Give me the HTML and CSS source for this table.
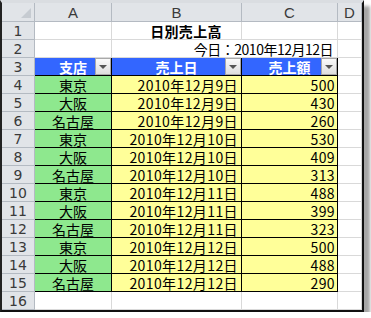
FILE: index.html
```html
<!DOCTYPE html>
<html lang="ja">
<head>
    <meta charset="utf-8">
    <title>日別売上高</title>
    <link rel="stylesheet" href="styles.css">
</head>
<body>
    <div class="window">
        <div class="sheet">
            <!-- column headers -->
            <div class="corner"></div>
            <div class="col-head">A</div>
            <div class="col-head">B</div>
            <div class="col-head">C</div>
            <div class="col-head">D</div>

            <!-- row 1: title, centred across A:C -->
            <div class="row-head">1</div>
            <div class="cell"></div>
            <div class="cell title">日別売上高</div>
            <div class="cell"></div>
            <div class="cell"></div>

            <!-- row 2: today -->
            <div class="row-head">2</div>
            <div class="cell"></div>
            <div class="cell joined"></div>
            <div class="cell today"><span>今日：2010年12月12日</span></div>
            <div class="cell"></div>

            <!-- row 3: table header -->
            <div class="row-head">3</div>
            <div class="cell th">支店<span class="filter"></span></div>
            <div class="cell th">売上日<span class="filter"></span></div>
            <div class="cell th">売上額<span class="filter"></span></div>
            <div class="cell"></div>

            <div class="row-head">4</div>
            <div class="cell branch">東京</div>
            <div class="cell date">2010年12月9日</div>
            <div class="cell amount">500</div>
            <div class="cell"></div>

            <div class="row-head">5</div>
            <div class="cell branch">大阪</div>
            <div class="cell date">2010年12月9日</div>
            <div class="cell amount">430</div>
            <div class="cell"></div>

            <div class="row-head">6</div>
            <div class="cell branch">名古屋</div>
            <div class="cell date">2010年12月9日</div>
            <div class="cell amount">260</div>
            <div class="cell"></div>

            <div class="row-head">7</div>
            <div class="cell branch">東京</div>
            <div class="cell date">2010年12月10日</div>
            <div class="cell amount">530</div>
            <div class="cell"></div>

            <div class="row-head">8</div>
            <div class="cell branch">大阪</div>
            <div class="cell date">2010年12月10日</div>
            <div class="cell amount">409</div>
            <div class="cell"></div>

            <div class="row-head">9</div>
            <div class="cell branch">名古屋</div>
            <div class="cell date">2010年12月10日</div>
            <div class="cell amount">313</div>
            <div class="cell"></div>

            <div class="row-head">10</div>
            <div class="cell branch">東京</div>
            <div class="cell date">2010年12月11日</div>
            <div class="cell amount">488</div>
            <div class="cell"></div>

            <div class="row-head">11</div>
            <div class="cell branch">大阪</div>
            <div class="cell date">2010年12月11日</div>
            <div class="cell amount">399</div>
            <div class="cell"></div>

            <div class="row-head">12</div>
            <div class="cell branch">名古屋</div>
            <div class="cell date">2010年12月11日</div>
            <div class="cell amount">323</div>
            <div class="cell"></div>

            <div class="row-head">13</div>
            <div class="cell branch">東京</div>
            <div class="cell date">2010年12月12日</div>
            <div class="cell amount">500</div>
            <div class="cell"></div>

            <div class="row-head">14</div>
            <div class="cell branch">大阪</div>
            <div class="cell date">2010年12月12日</div>
            <div class="cell amount">488</div>
            <div class="cell"></div>

            <div class="row-head">15</div>
            <div class="cell branch">名古屋</div>
            <div class="cell date">2010年12月12日</div>
            <div class="cell amount">290</div>
            <div class="cell"></div>

            <div class="row-head">16</div>
            <div class="cell"></div>
            <div class="cell"></div>
            <div class="cell"></div>
            <div class="cell"></div>
        </div>
    </div>
</body>
</html>
```

FILE: styles.css
```css
body {
    margin: 0;
    background-color: white;
    font-family: "Noto Sans CJK JP", "Noto Sans", sans-serif;
    font-size: 14px;
    color: black;
}

.window {
    width: 360px;
    border-left: 2px solid #222;
    border-right: 2px solid #111;
    border-bottom: 2px solid #111;
    border-top: 3px solid #dadde1;
    box-shadow: 6px 6px 3px rgba(0, 0, 0, 0.35);
}

.sheet {
    display: grid;
    grid-template-columns: 33px 77px 130px 96px 24px;
    grid-template-rows: 19px repeat(16, 18px);
    background-color: white;
}

.sheet > div {
    box-sizing: border-box;
    display: flex;
    align-items: center;
    line-height: 1;
    white-space: nowrap;
}

/* headers */
.corner,
.col-head,
.row-head {
    background-color: #e1e4e8;
    border-right: 1px solid #b4bac2;
    border-bottom: 1px solid #b4bac2;
    color: #3a3a3a;
    justify-content: center;
    font-family: "DejaVu Sans", sans-serif;
    font-size: 14px;
}

.col-head {
    font-family: "Liberation Sans", sans-serif;
    font-size: 15px;
}

.corner {
    position: relative;
}

.corner::after {
    content: "";
    position: absolute;
    right: 3px;
    bottom: 3px;
    border-left: 10px solid transparent;
    border-bottom: 10px solid #c6cbd1;
}

/* plain cells */
.cell {
    border-right: 1px solid #d9d9d9;
    border-bottom: 1px solid #d9d9d9;
}

.cell.joined {
    border-right-color: white;
}

/* the title is centred over A:C, so it sits right of B's centre */
.title {
    justify-content: center;
    padding-left: 19px;
    font-weight: bold;
    letter-spacing: 0.3px;
}

.today {
    justify-content: flex-end;
    padding-right: 4px;
}

.today span {
    letter-spacing: -0.5px;
}

/* table */
.th,
.branch,
.date,
.amount {
    border-right-color: black;
    border-bottom-color: black;
}

.th {
    position: relative;
    background-color: #3366ff;
    color: white;
    font-weight: bold;
    justify-content: center;
}

.filter {
    position: absolute;
    right: 0;
    top: 0;
    width: 16px;
    height: 17px;
    box-sizing: border-box;
    border: 1px solid #a9a9a9;
    background: linear-gradient(#fafafa, #dedede);
}

.filter::after {
    content: "";
    position: absolute;
    left: 3px;
    top: 6px;
    border-left: 4px solid transparent;
    border-right: 4px solid transparent;
    border-top: 4px solid #555;
}

.branch {
    background-color: #8ee88e;
    justify-content: center;
}

.date,
.amount {
    background-color: #ffff99;
    justify-content: flex-end;
    padding-right: 3px;
    letter-spacing: 0.4px;
}

.amount {
    padding-right: 2px;
}
```
